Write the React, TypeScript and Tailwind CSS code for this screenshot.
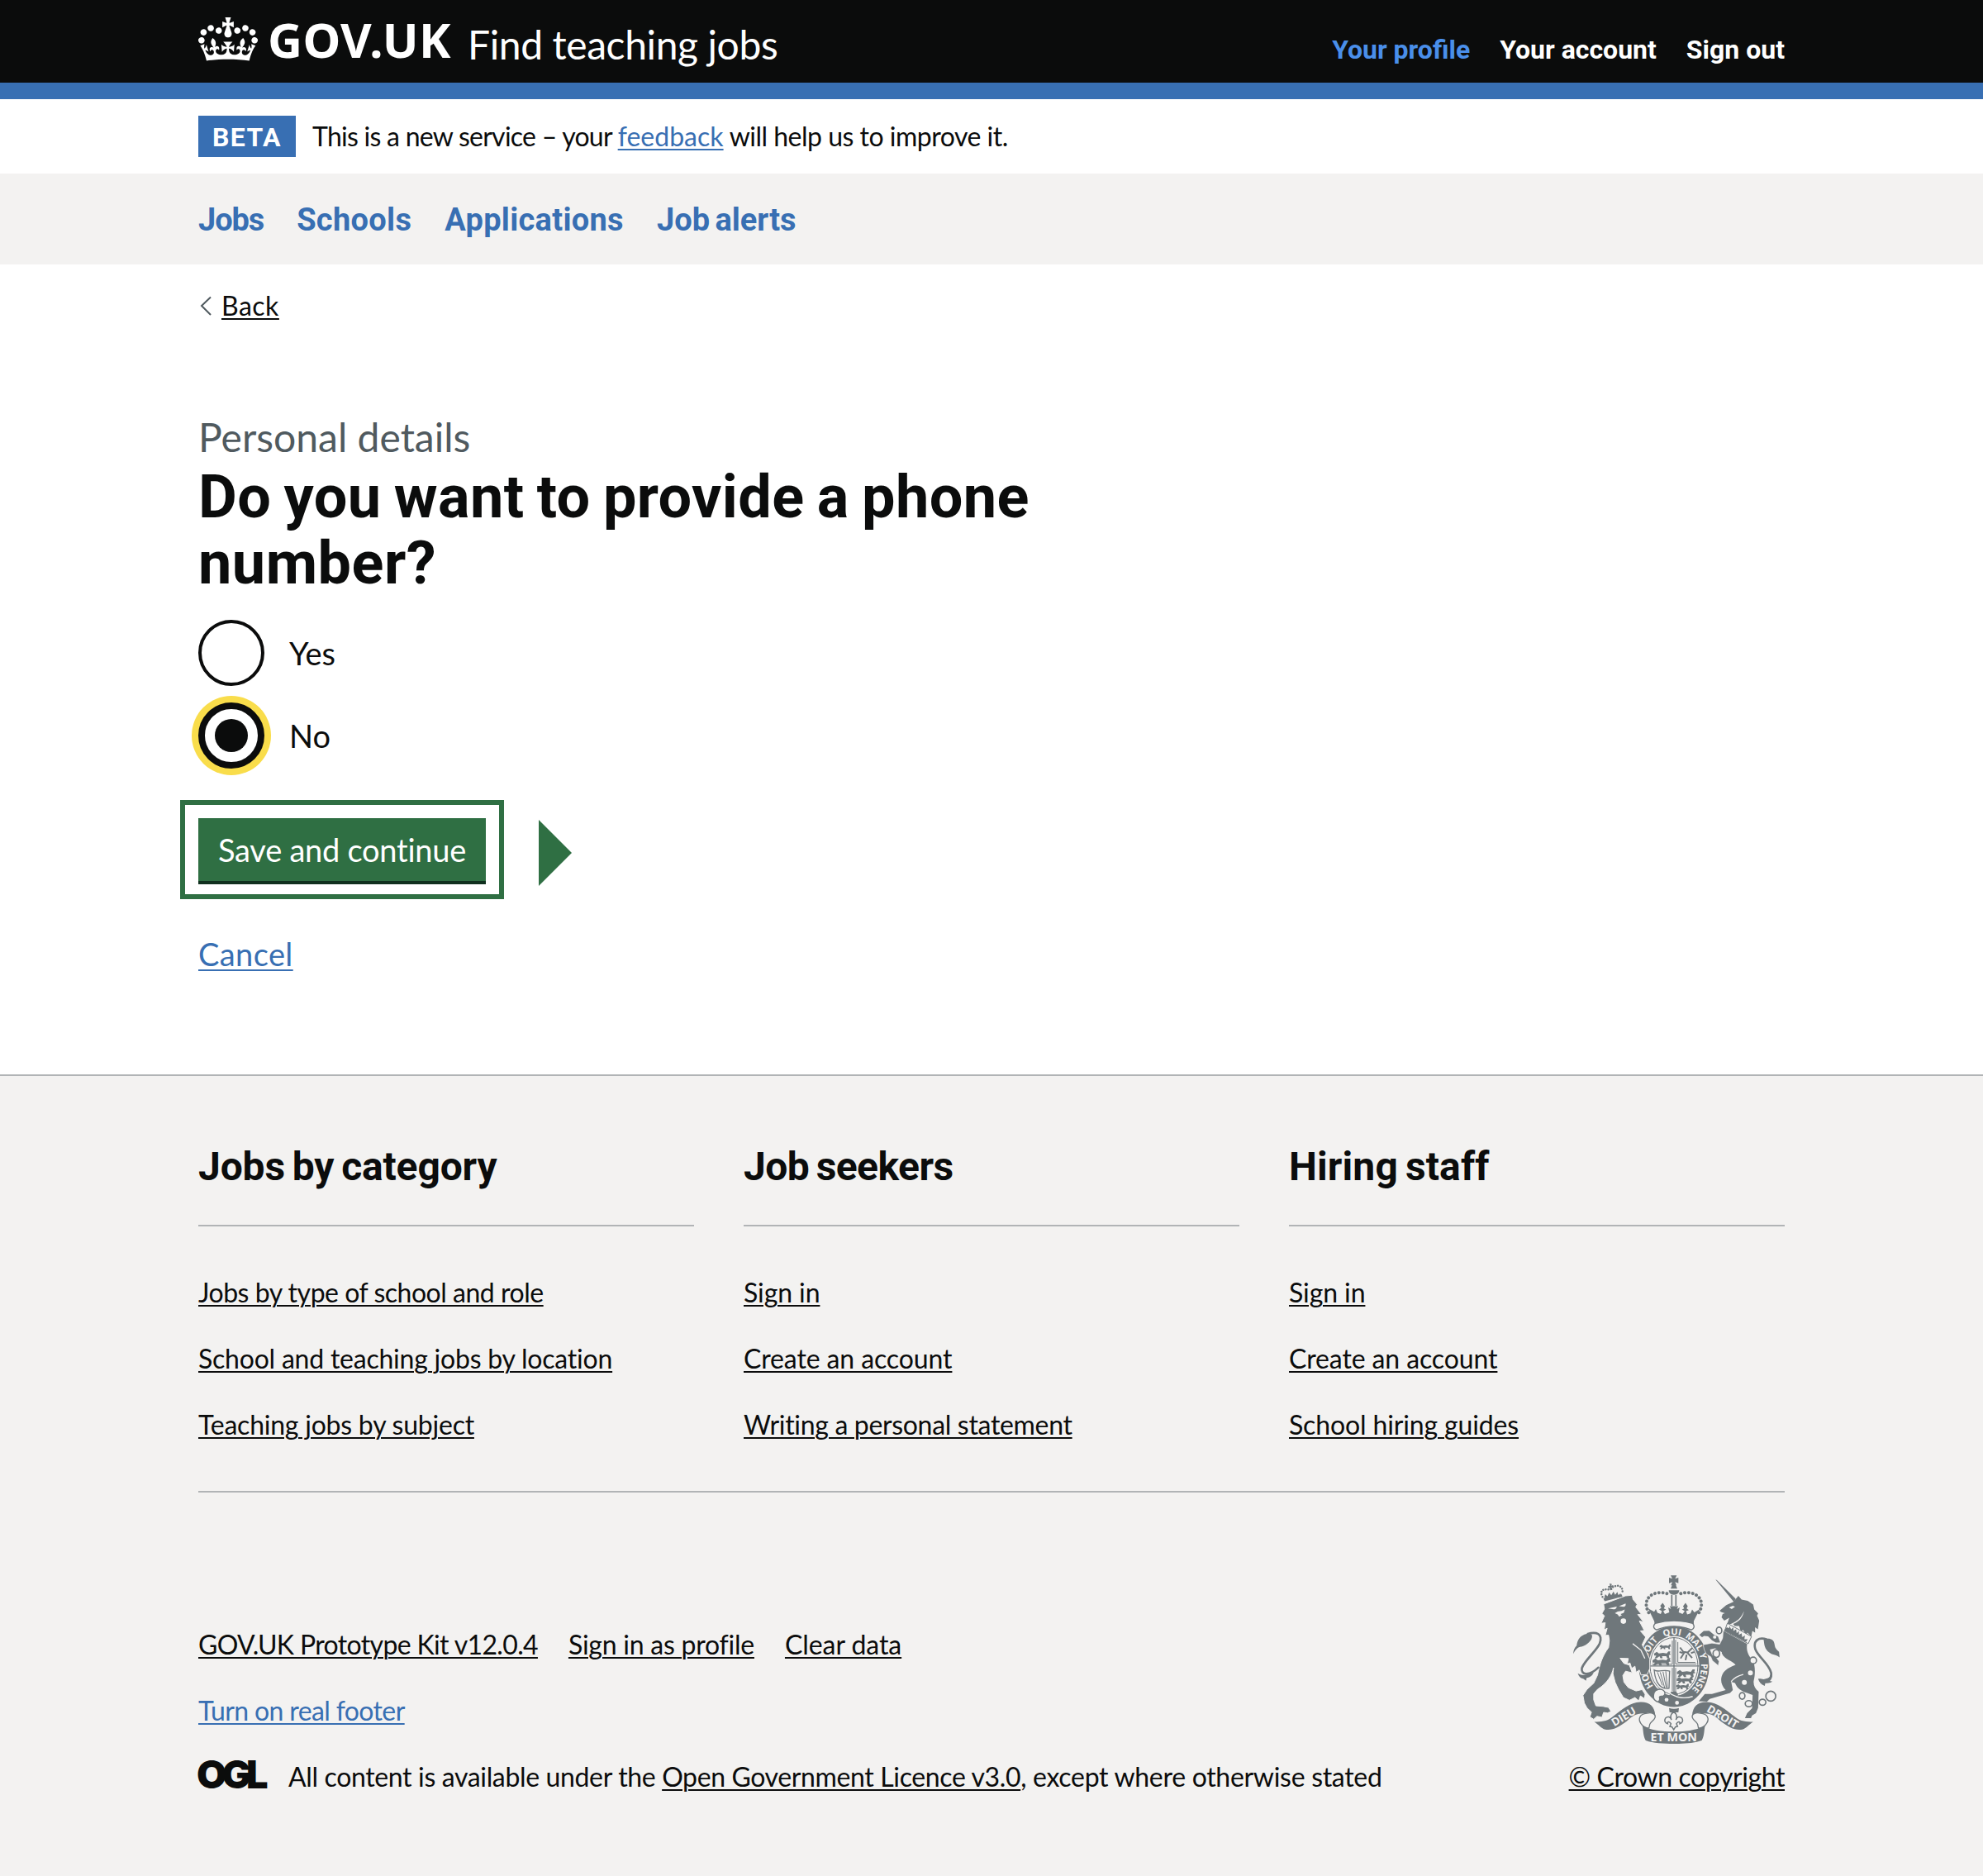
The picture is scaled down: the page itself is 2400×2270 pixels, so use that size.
import type { ReactNode } from "react";

const GREY = "#6f777b";
const PAPER = "#f3f2f1";

const link = "underline decoration-2 underline-offset-[3px]";

type FooterLink = { text: string; spacing: string };

const columns: { title: string; spacing: string; links: FooterLink[] }[] = [
  {
    title: "Jobs by category",
    spacing: "tracking-[-0.15px] [word-spacing:-3px]",
    links: [
      { text: "Jobs by type of school and role", spacing: "tracking-[-0.48px]" },
      { text: "School and teaching jobs by location", spacing: "tracking-[-0.22px]" },
      { text: "Teaching jobs by subject", spacing: "tracking-[-0.23px]" },
    ],
  },
  {
    title: "Job seekers",
    spacing: "tracking-[-0.55px] [word-spacing:-3px]",
    links: [
      { text: "Sign in", spacing: "tracking-[-0.1px]" },
      { text: "Create an account", spacing: "tracking-[-0.11px]" },
      { text: "Writing a personal statement", spacing: "tracking-[-0.32px]" },
    ],
  },
  {
    title: "Hiring staff",
    spacing: "tracking-[0.12px] [word-spacing:-3px]",
    links: [
      { text: "Sign in", spacing: "tracking-[-0.1px]" },
      { text: "Create an account", spacing: "tracking-[-0.11px]" },
      { text: "School hiring guides", spacing: "tracking-[-0.14px]" },
    ],
  },
];

function Container({ children, className = "" }: { children: ReactNode; className?: string }) {
  return <div className={`mx-[240px] ${className}`}>{children}</div>;
}

function Crown() {
  return (
    <svg viewBox="0 0 132 97" className="mt-[21px] h-[53px] w-[72px] shrink-0" fill="currentColor" aria-hidden="true">
      <path d="M25 30.2c3.5 1.5 7.7-.2 9.1-3.7 1.5-3.6-.2-7.8-3.9-9.2-3.6-1.4-7.6.3-9.1 3.9-1.4 3.5.3 7.5 3.9 9zM9 39.5c3.6 1.5 7.8-.2 9.2-3.7 1.5-3.6-.2-7.8-3.9-9.1-3.6-1.5-7.6.2-9.1 3.8-1.4 3.5.3 7.5 3.8 9zM4.4 57.2c3.5 1.5 7.7-.2 9.1-3.8 1.5-3.6-.2-7.7-3.9-9.1-3.5-1.5-7.6.3-9.1 3.8-1.4 3.5.3 7.6 3.9 9.1zm38.3-21.4c3.5 1.5 7.7-.2 9.1-3.8 1.5-3.6-.2-7.7-3.9-9.1-3.6-1.5-7.6.3-9.1 3.8-1.3 3.6.4 7.7 3.9 9.1zm64.4-5.6c-3.6 1.5-7.8-.2-9.1-3.7-1.5-3.6.2-7.8 3.8-9.2 3.6-1.4 7.7.3 9.2 3.9 1.3 3.5-.4 7.5-3.9 9zm15.9 9.3c-3.6 1.5-7.7-.2-9.1-3.7-1.5-3.6.2-7.8 3.7-9.1 3.6-1.5 7.7.2 9.2 3.8 1.5 3.5-.3 7.5-3.8 9zm4.7 17.7c-3.6 1.5-7.8-.2-9.2-3.8-1.5-3.6.2-7.7 3.9-9.1 3.6-1.5 7.7.3 9.2 3.8 1.3 3.5-.4 7.6-3.9 9.1zM89.3 35.8c-3.6 1.5-7.8-.2-9.2-3.8-1.4-3.6.2-7.7 3.9-9.1 3.6-1.5 7.7.3 9.2 3.8 1.4 3.6-.3 7.7-3.9 9.1zM69.7 17.7l8.9 4.7V9.3l-8.9 2.8c-.2-.3-.5-.6-.9-.9L72.4 0H59.6l3.5 11.2c-.3.3-.6.5-.9.9l-8.8-2.8v13.1l8.8-4.7c.3.3.6.7.9.9l-5 15.4v.1c-.2.8-.4 1.6-.4 2.4 0 4.1 3.1 7.5 7 8.1h.2c.3 0 .7.1 1 .1.4 0 .7 0 1-.1h.2c4-.6 7.1-4.1 7.1-8.1 0-.8-.1-1.7-.4-2.4V34l-5.1-15.4c.4-.2.7-.6 1-.9zM66 92.8c16.9 0 32.8 1.1 47.1 3.2 4-16.9 8.9-26.7 14-33.5l-9.6-3.4c1 4.9 1.1 7.2 0 10.2-1.5-1.4-3-4.3-4.2-8.7L108.6 76c2.8-2 5-3.2 7.5-3.3-4.4 9.4-10 11.9-13.6 11.2-4.3-.8-6.3-4.6-5.6-7.9 1-4.7 5.7-5.9 8-.5 4.3-8.7-3-11.4-7.6-8.8 7.1-7.2 7.9-13.5 2.1-21.1-8 6.1-8.1 12.3-4.5 20.8-4.7-5.4-12.1-2.5-9.5 6.2 3.4-5.2 7.9-2 7.2 3.1-.6 4.3-6.4 7.8-13.5 7.2-10.3-.9-10.9-8-11.2-13.8 2.5-.5 7.1 1.8 11 7.3L80.2 60c-4.1 4.4-8 5.3-12.3 5.4 1.4-4.4 8-11.6 8-11.6H55.5s6.4 7.2 7.9 11.6c-4.2-.1-8-1-12.3-5.4l1.4 16.4c3.9-5.5 8.5-7.7 10.9-7.3-.3 5.8-.9 12.8-11.1 13.8-7.2.6-12.9-2.9-13.5-7.2-.7-5 3.8-8.3 7.1-3.1 2.7-8.7-4.6-11.6-9.4-6.2 3.7-8.5 3.6-14.7-4.6-20.8-5.8 7.6-5 13.9 2.2 21.1-4.7-2.6-11.9.1-7.7 8.8 2.3-5.5 7.1-4.2 8.1.5.7 3.3-1.3 7.1-5.7 7.9-3.5.7-9-1.8-13.5-11.2 2.5.1 4.7 1.3 7.5 3.3l-4.7-15.4c-1.2 4.4-2.7 7.2-4.3 8.7-1.1-3-.9-5.3 0-10.2l-9.5 3.4c5 6.9 9.9 16.7 14 33.5 14.8-2.1 30.8-3.2 47.7-3.2z" />
    </svg>
  );
}

function PassantLion({ x, y, s = 1 }: { x: number; y: number; s?: number }) {
  return (
    <path
      transform={`translate(${x} ${y}) scale(${s})`}
      fill={GREY}
      d="M0 3l5-3 4 3 8-1 7 1 3-4 4 0-1 4 2 2-4 1 1 6-4 0-2-4-8 0 1 4-4 0-2-4-5 4-4 0 3-5-4 0z"
    />
  );
}

function Ribbon() {
  return (
    <>
      <path fill={GREY} d="M148 580c26-1 44 0 66-18 38-28 62-52 102-54 32-1 52 14 54 50-14-9-26-12-38-8-30-2-46 10-66 28-30 22-50 34-78 30-14-4-24-18-40-28z" />
      <path fill={PAPER} stroke={GREY} strokeWidth="4" d="M340 549c18-5 33 4 29 16-3 10-16 14-19 24l-3 14c-10 0-18-4-24-10-10-11-13-22-9-30 4-9 14-13 26-14z" />
    </>
  );
}

function RoyalArms() {
  return (
    <svg viewBox="72 47 750 613" className="h-[204px] w-[250px]" aria-hidden="true">
      {/* Garter and shield */}
      <ellipse cx="438" cy="379" rx="128" ry="147" fill={GREY} />
      <ellipse cx="438" cy="377" rx="92" ry="109" fill={PAPER} />
      <ellipse cx="438" cy="377" rx="87" ry="103" fill="none" stroke={GREY} strokeWidth="3" />
      <path stroke={GREY} strokeWidth="4" d="M438 272v212M346 377h184" />
      <path fill="none" stroke={GREY} strokeWidth="3" d="M432 285v86H358M444 282v88h76M432 384v84M444 384v92M452 290v74h64" />
      <PassantLion x={386} y={300} s={1.3} />
      <PassantLion x={366} y={326} s={1.9} />
      <PassantLion x={360} y={350} s={2.1} />
      <PassantLion x={449} y={392} s={2.1} />
      <PassantLion x={448} y={418} s={1.9} />
      <PassantLion x={446} y={444} s={1.5} />
      <path fill="none" stroke={GREY} strokeWidth="6" d="M460 310l12 16 14 2 18 20M488 328l16-16M476 328l-14 22M484 336l-4 20M500 330l12-4M458 326l12 4" />
      <path fill="none" stroke={GREY} strokeWidth="4" d="M366 392c16 10 34-4 56 4l-2 62c-30 6-50-18-54-66z" />
      <path fill="none" stroke={GREY} strokeWidth="3" d="M378 400l18 48M388 400l16 56M398 398l12 58M408 396l6 60" />
      <path fill={GREY} d="M420 486l8-16 18 0 8 14-16 4z" />
      <defs>
        <path id="garter" d="M438 490A99 113 0 0 1 339 377A99 113 0 0 1 438 264A99 113 0 0 1 537 377A99 113 0 0 1 438 490" />
      </defs>
      <g fill={PAPER} fontFamily="'Open Sans', 'Noto Sans', sans-serif" fontWeight="700" fontSize="33" textAnchor="middle">
        <text><textPath href="#garter" startOffset="17%">HO</textPath></text>
        <text><textPath href="#garter" startOffset="35%">SOIT</textPath></text>
        <text><textPath href="#garter" startOffset="49%">QUI</textPath></text>
        <text><textPath href="#garter" startOffset="61.5%">MAL</textPath></text>
        <text><textPath href="#garter" startOffset="69.8%">Y</textPath></text>
        <text><textPath href="#garter" startOffset="81.5%">PENSE</textPath></text>
      </g>
      <path fill="none" stroke={PAPER} strokeWidth="4" d="M404 462c36 34 70 36 102 26" />
      <path fill={PAPER} stroke={GREY} strokeWidth="4" d="M366 474c4-12 24-16 34-8 8 6 6 18-2 20-10 0-16 2-12 10 0 10-8 14-14 8-10-6-10-18-6-30z" />
      <circle cx="411" cy="500" r="7" fill={PAPER} />
      <circle cx="449" cy="511" r="7" fill={PAPER} />

      {/* Lion */}
      <path
        fill={GREY}
        stroke={PAPER}
        strokeWidth="3"
        d="M182 152L262 122L286 120L289 135L304 153L299 163L320 190L306 190L327 217L312 214L330 248L316 250L335 272L322 300L340 330L350 352L350 386L341 408L318 410L312 392L300 400L296 378L284 386L278 366L268 370L272 350L242 349L256 368L276 374L286 402L262 396L252 412L256 436L272 456L300 468L322 463L333 480L331 496L316 486L310 504L296 492L276 502L254 492L236 462L224 436L216 405L218 384C212 410 196 440 160 462L146 478L146 500L154 522L180 524L200 528L209 543L196 548L182 546L176 564L158 560L146 571L132 562L138 545L122 530L112 512L107 484L122 462L146 440L160 410C168 370 178 340 200 310L203 285L200 265L188 266L195 240L184 246L188 220L173 222L185 195L176 186L185 170Z"
      />
      <g transform="translate(60 30)">
        <path fill="none" stroke={GREY} strokeWidth="8" d="M62 231c34-10 58-2 46 34-10 26-56 62-65 90-4 22 22 34 62-4" />
        <path fill={GREY} d="M12 303c0-14 4-22 12-30 2-22 14-38 36-43 14-3 22 2 20 12-4 20-30 34-44 36-10 3-18 12-24 25z" />
        <path fill={GREY} d="M28 374c14 8 26 8 38 3l20-6c-6 14-16 18-26 20l-2 10-10-8c-10 0-16-8-20-19z" />
        <path fill={PAPER} d="M138 138l32-7c-2 8-6 10-12 10zM178 130l24-10c2 8-2 12-8 12zM163 155l10-6 14-2 12-5-4 14 6 6-16 2-6 4-6-8z" />
        <circle cx="194" cy="184" r="10" fill={PAPER} />
        <path fill={GREY} d="M184 158l16-6 2 12-8 6z" />
        <path fill="none" stroke={PAPER} strokeWidth="4" d="M228 266l30 24 14 30" />
        <path fill={GREY} d="M121 102l66-16 4 9-65 17zM124 100l4-14 8 8 6-14 8 10 8-14 6 12 8-10 4 12 8-8-2 16z" />
        <path fill={GREY} d="M144 47l8 2-2 6 7-2 1 7-7-1 3 11-8 2-1-11-6 3-1-7 7-2z" />
        <path fill="none" stroke={GREY} strokeWidth="7.500" strokeLinecap="round" strokeDasharray="0.1 9.5" d="M118 96c-10-20-2-32 26-26 20-22 52-20 46 14" />
      </g>

      {/* Unicorn */}
      <path fill={GREY} d="M530 264L546 250L566 249L584 264L598 270L606 292L590 292L576 284L562 269L548 268L540 272Z" />
      <path fill={GREY} stroke={PAPER} strokeWidth="2" d="M618 270L604 298L576 294L544 300L548 318L556 334L572 344L578 358L590 368L599 376L602 360L590 344L578 338L570 318L588 314L622 334Z" />
      <g transform="translate(444 30)">
        <path fill={GREY} d="M145 33l5 2 68 68-6 12z" />
        <path
          fill={GREY}
          d="M160 146l24-20 26-12 18-22 12 14 22 4 20 14 4 18 14 14-4 8 8 18-5 32-10-8 0 20-10-6-4 20-14-14-4 8-12-18-8 6-6-20-16 0-6-8c20-6 34-20 40-46-12 26-26 38-48 46l-14 2 8-24-18 10-10-12 4-12 8-3-14-4z"
        />
        <path fill={PAPER} d="M194 134l14-6 8 4-12 8z" />
        <path fill={PAPER} stroke={GREY} strokeWidth="3" d="M188 192l88 48-12 26-86-46z" />
        <path fill={GREY} d="M186 206l8 4 2-8 6 12 8-8 0 14 10-6 2 14 8-8 0 14 10-6 2 14 10-6-2 14 12 0-6 10-80-42z" />
        <path
          fill={GREY}
          d="M174 220l86 47c-4 24 4 42 20 58 10 20 10 52 4 76-2 14 4 30 18 40l-2 58-8 20-14 8-4 10-22 0 8-18 18-18 2-48-20-8c-20-6-36-16-44-36l-14-4 6 30-10 10-74 22-10 10-30-2 22-26 26 0 50-14c-18-20-22-42-8-64 12-16 30-22 44-28-12-16-40-18-50-42z"
        />
        <path fill="none" stroke={PAPER} strokeWidth="4" d="M202 404c12-16 28-22 44-26" />
        <path fill="none" stroke={GREY} strokeWidth="8" d="M332 251c-28-10-52 2-42 36 12 30 48 50 57 84 4 22-12 30-34 30" />
        <path fill={GREY} d="M320 250c22-6 38 0 40 20 2 16 10 18 16 26l2 20c-8-8-16-8-28-12-18-8-26-22-28-38z" />
        <path fill={GREY} d="M300 394c10-2 18 4 26 0 12-2 20-6 26-14-2 12-4 18-10 22l10 2c-10 6-20 6-26 6l-2 10c-14-6-20-14-24-26z" />
        <g fill={PAPER} stroke={GREY} strokeWidth="5">
          <ellipse cx="158" cy="218" rx="10" ry="12" />
          <ellipse cx="148" cy="302" rx="12" ry="14" />
          <circle cx="282" cy="327" r="12" />
          <ellipse cx="242" cy="456" rx="10" ry="12" />
          <ellipse cx="266" cy="484" rx="13" ry="11" />
          <ellipse cx="316" cy="479" rx="12" ry="11" />
          <circle cx="346" cy="457" r="18" />
        </g>
        <circle cx="272" cy="372" r="9" fill={PAPER} />
        <circle cx="250" cy="407" r="9" fill={PAPER} />
        <circle cx="142" cy="242" r="6" fill={PAPER} />
      </g>

      {/* Imperial crown */}
      <path fill={GREY} d="M426 48h22l-6 12 12-4v20l-12-4 5 12h-20l5-12-12 4V56l12 4zM426 96l5-12h14l5 12zM419 102h38c0 10-8 16-19 16s-19-6-19-16z" />
      <path stroke={GREY} strokeWidth="5" d="M430 118v40M445 118v40" />
      <g fill="none" stroke={GREY} strokeWidth="12" strokeLinecap="round" strokeDasharray="0.1 14.2">
        <path d="M346 183c-22-38 0-68 34-72 18-2 32 2 40 6" />
        <path d="M529 183c22-38 0-68-34-72-18-2-32 2-40 6" />
      </g>
      <path
        fill={GREY}
        d="M344 168l22 12 6-10 6 14 12 4 4-10-10-6 8-6-4-8 9-10 8 12-4 8 8 4-10 6 6 10 16-6-4-18 10 6-4-10h30l-4 10 10-6-4 18 14 6 8-10-10-6 8-4-4-8 9-12 8 12-4 8 8 6-10 4 4 12 12-4 6-14 8 10 20-12-22 44 0 12c-44-14-100-14-142 0l-2-12z"
      />
      <path fill={PAPER} stroke={GREY} strokeWidth="4" d="M370 222c44-12 92-12 136 0 8 10 6 20-4 24-44-18-84-18-128 0-10-4-14-14-4-24z" />

      {/* Ribbon */}
      <Ribbon />
      <g transform="matrix(-1 0 0 1 874 0)">
        <Ribbon />
      </g>
      <path fill={GREY} d="M323 594c28 16 70 22 114 22s86-6 114-22c-4 18-2 36-12 54-28 10-64 12-102 12s-74-2-102-12c-10-18-8-36-12-54z" />
      <g fill={PAPER} fontFamily="'Open Sans', 'Noto Sans', sans-serif" fontWeight="700" textAnchor="middle">
        <text x="437" y="652" fontSize="43">ET MON</text>
        <text transform="translate(262 573) rotate(-31)" fontSize="40">DIEU</text>
        <text transform="translate(608 573) rotate(31)" fontSize="40">DROIT</text>
      </g>

      {/* Fleur-de-lis */}
      <path fill={GREY} d="M420 530c12 4 24 4 36 0l-2 16h-32z" />
      <path
        fill={PAPER}
        stroke={GREY}
        strokeWidth="4.500"
        d="M437 543c-10 8-14 18-8 30-4-12-14-14-22-6-6 10 0 18 8 20-2-8 6-10 12 0l-4 10 8 2 6 10 6-10 8-2-4-10c6-10 14-8 12 0 8-2 14-10 8-20-8-8-18-6-22 6 6-12 2-22-8-30z"
      />
    </svg>
  );
}

function Radio({ label, checked }: { label: string; checked?: boolean }) {
  return (
    <label className="flex h-[80px] items-start">
      {checked ? (
        <span className="flex size-[80px] shrink-0 items-center justify-center rounded-full border-8 border-[#0b0c0c] bg-white ring-8 ring-[#f9dd4b]">
          <span className="size-[40px] rounded-full bg-[#0b0c0c]" />
        </span>
      ) : (
        <span className="size-[80px] shrink-0 rounded-full border-4 border-[#0b0c0c] bg-white" />
      )}
      <span className="mt-[15px] ml-[30px] text-[38px] leading-[50px]">{label}</span>
    </label>
  );
}

export default function App() {
  return (
    <div className="flex h-[2270px] w-[2400px] flex-col overflow-hidden bg-white font-[Lato,'Liberation_Sans',sans-serif] text-[32px] leading-[40px] text-[#0b0c0c] antialiased">
      <header className="h-[120px] border-b-[20px] border-[#386fb3] bg-[#0b0c0c] text-white">
        <Container className="flex h-[100px] items-start">
          <Crown />
          <span className="mt-[18px] ml-[12px] w-[242px] text-[58px] leading-[60px] font-bold whitespace-nowrap font-['Noto_Sans',sans-serif] tracking-[0.4px]">GOV.UK</span>
          <span className="mt-[24px] text-[48px] leading-[60px] tracking-[-0.4px] whitespace-nowrap">Find teaching jobs</span>
          <nav className="mt-[40px] ml-auto flex gap-[36px] font-[Roboto,sans-serif] font-bold">
            <a className="text-[#4a8fea]">Your profile</a>
            <a>Your account</a>
            <a>Sign out</a>
          </nav>
        </Container>
      </header>

      <Container className="flex h-[90px] items-start pt-[20px]">
        <strong className="h-[50px] w-[118px] bg-[#386fb3] pt-px text-center font-[Roboto,sans-serif] leading-[50px] font-bold tracking-[1.4px] text-white">BETA</strong>
        <p className="mt-[5px] ml-[20px] whitespace-pre">
          <span className="tracking-[-0.74px]">This is a new service – your </span>
          <a className="tracking-[0.02px] text-[#386fb3] underline decoration-2 underline-offset-[3px]">feedback</a>
          <span className="tracking-[-0.5px]"> will help us to improve it.</span>
        </p>
      </Container>

      <nav className="h-[110px] bg-[#f3f2f1]">
        <Container className="flex gap-[40px] pt-[31px] font-[Roboto,sans-serif] text-[38px] leading-[50px] font-bold text-[#386fb3]">
          <a className="tracking-[-1.1px]">Jobs</a>
          <a className="tracking-[0.3px]">Schools</a>
          <a className="tracking-[0.3px]">Applications</a>
          <a className="tracking-[0px] [word-spacing:-3px]">Job alerts</a>
        </Container>
      </nav>

      <Container className="flex flex-col items-start">
        <a className="mt-[29px] flex h-[40px] items-start">
          <svg viewBox="0 0 28 40" className="h-[40px] w-[28px]" fill="none" stroke="#505a5f" strokeWidth="2" aria-hidden="true">
            <path d="M15 10.500L4 21L15 32" />
          </svg>
          <span className={`mt-px ${link} tracking-[0.5px]`}>Back</span>
        </a>

        <h1 className="mt-[108px] font-[Roboto,sans-serif] text-[72px] leading-[80px] font-bold whitespace-nowrap">
          <span className="mt-[2px] mb-[2px] block font-[Lato,sans-serif] text-[48px] leading-[60px] font-normal tracking-[0.01px] text-[#505a5f]">Personal details</span>
          <span className="block pt-px tracking-[0.4px] [word-spacing:-3px]">Do you want to provide a phone</span>
          <span className="block tracking-[0.5px]">number?</span>
        </h1>

        <div className="mt-[28px] flex flex-col gap-[20px]">
          <Radio label="Yes" />
          <Radio label="No" checked />
        </div>

        <div className="mt-[38px] -ml-[22px] flex items-center">
          <div className="h-[120px] w-[392px] border-[6px] border-[#2f6f43] pt-[16px] pl-[16px]">
            <button className="flex h-[80px] w-[348px] items-start justify-center border-b-4 border-[#10301e] bg-[#2f6f43] pt-[13px] text-[38px] leading-[50px] tracking-[-0.25px] whitespace-nowrap text-white">
              Save and continue
            </button>
          </div>
          <svg viewBox="0 0 40 80" className="mt-[8px] ml-[42px] h-[80px] w-[40px]" fill="#2f6f43" aria-hidden="true">
            <path d="M0 0L40 40L0 80Z" />
          </svg>
        </div>

        <a className="mt-[41px] text-[38px] leading-[50px] tracking-[0.4px] text-[#386fb3] underline decoration-2 underline-offset-[4px]">Cancel</a>
      </Container>

      <footer className="mt-auto h-[970px] border-t-2 border-[#b1b4b6] bg-[#f3f2f1]">
        <Container className="flex h-full flex-col">
          <div className="grid h-[504px] shrink-0 grid-cols-3 gap-[60px] border-b-2 border-[#b1b4b6]">
            {columns.map((column) => (
              <section key={column.title}>
                <h2 className={`mt-[80px] h-[102px] border-b-2 border-[#b1b4b6] font-[Roboto,sans-serif] text-[48px] leading-[60px] font-bold ${column.spacing}`}>{column.title}</h2>
                <ul className="mt-[60px] flex flex-col gap-[40px]">
                  {column.links.map((item) => (
                    <li key={item.text} className="h-[40px] whitespace-nowrap">
                      <a className={`${link} ${item.spacing}`}>{item.text}</a>
                    </li>
                  ))}
                </ul>
              </section>
            ))}
          </div>

          <div className="flex justify-between whitespace-nowrap">
            <div className="flex flex-col gap-[40px] pt-[164px]">
              <div className="flex gap-[37px]">
                <a className={`${link} tracking-[-0.65px]`}>GOV.UK Prototype Kit v12.0.4</a>
                <a className={`${link} tracking-[-0.24px]`}>Sign in as profile</a>
                <a className={`${link} tracking-[-0.07px]`}>Clear data</a>
              </div>
              <a className={`self-start text-[#386fb3] ${link} tracking-[-0.62px]`}>Turn on real footer</a>
              <div className="flex h-[40px]">
                <span className="-mt-[3px] -ml-[2px] w-[111px] font-[Inter,sans-serif] text-[47px] leading-[40px] font-black tracking-[-6px]">OGL</span>
                <p className="whitespace-pre">
                  <span className="tracking-[-0.35px]">All content is available under the </span>
                  <a className={`${link} tracking-[-0.37px]`}>Open Government Licence v3.0</a>
                  <span className="tracking-[-0.3px]">, except where otherwise stated</span>
                </p>
              </div>
            </div>
            <div className="flex w-[262px] flex-col items-end pt-[100px]">
              <div className="mr-[6px] h-[204px]">
                <RoyalArms />
              </div>
              <a className={`mt-[20px] ${link} tracking-[-0.41px]`}>© Crown copyright</a>
            </div>
          </div>
        </Container>
      </footer>
    </div>
  );
}
